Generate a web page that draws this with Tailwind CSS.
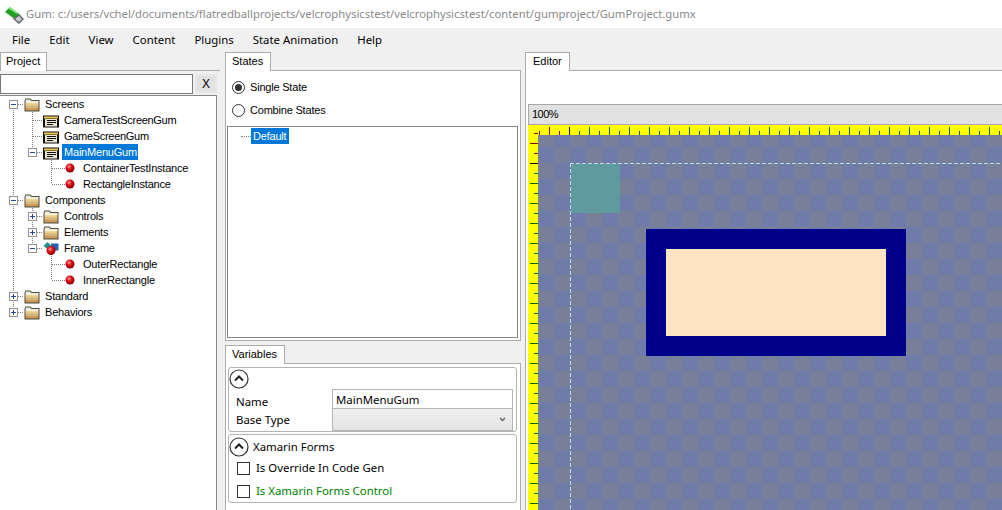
<!DOCTYPE html>
<html lang="en">
<head>
    <meta charset="UTF-8">
    <title>Gum</title>
    <script src="https://cdn.jsdelivr.net/npm/@tailwindcss/browser@4"></script>
</head>
<body class="w-[1002px] h-[510px] overflow-hidden bg-[#f0f0f0] font-['Noto_Sans',sans-serif] text-[11.4px] leading-4 text-black">
    <svg class="absolute w-0 h-0">
        <defs>
            <linearGradient id="folderFill" x1="0" y1="0" x2="0" y2="1">
                <stop offset="0" stop-color="#f3dc98"/>
                <stop offset="1" stop-color="#c08f55"/>
            </linearGradient>
            <radialGradient id="ballFill" cx="0.4" cy="0.35" r="0.7">
                <stop offset="0" stop-color="#ffa0a0"/>
                <stop offset="0.4" stop-color="#e01016"/>
                <stop offset="1" stop-color="#7a0508"/>
            </radialGradient>
            <symbol id="folder" viewBox="0 0 16 16">
                <path d="M0.5 5 L1.500 2.500 H6.500 L8 4 H15.500 V15.500 H0.500 Z" fill="#4f4c38"/>
                <path d="M1.500 5 L2.200 3.500 H6 L7.500 5 H14.500 V7 H1.500 Z" fill="#f2efe0"/>
                <rect x="1.500" y="7" width="13" height="7.500" fill="url(#folderFill)"/>
            </symbol>
            <symbol id="screen" viewBox="0 0 16 16">
                <rect x="0" y="3.500" width="16" height="12" fill="#111"/>
                <rect x="1" y="4.500" width="14" height="2" fill="#f2c94c"/>
                <rect x="2" y="7" width="12" height="7.500" fill="#e8e4d0"/>
                <path d="M4 8.500 H13 M4 10.500 H13 M4 12.500 H10" stroke="#111" fill="none"/>
            </symbol>
            <symbol id="ball" viewBox="0 0 10 10">
                <circle cx="5" cy="5" r="4.500" fill="url(#ballFill)"/>
            </symbol>
            <symbol id="frameIcon" viewBox="0 0 16 16">
                <path d="M0.500 6 L4.500 2 L8 5.500 L4.500 9 Z" fill="#1f8f8a"/>
                <rect x="8" y="3.500" width="7.500" height="7" fill="#2a5fb5"/>
                <circle cx="8" cy="10.500" r="4.500" fill="url(#ballFill)"/>
            </symbol>
            <symbol id="collapse" viewBox="0 0 20 20">
                <circle cx="10" cy="10" r="9" fill="#fff" stroke="#333" stroke-width="1.200"/>
                <path d="M6 11.500 L10 7.500 L14 11.500" fill="none" stroke="#222" stroke-width="2"/>
            </symbol>
        </defs>
    </svg>

    <!-- title bar -->
    <div class="h-[28px] bg-white flex items-center pl-[5px] gap-px">
        <svg class="w-[20px] h-[20px] mt-[2px]" viewBox="0 0 20 20">
            <path d="M0 7 L5 2 L13 8 L16 11 L11 15 Z" fill="#22a022"/>
            <path d="M5 2 L13 8 L12 9 L3.500 3.500 Z" fill="#86e886"/>
            <path d="M8 14 L14 9 L19 14 L14 19 Z" fill="#62666a"/>
            <path d="M10 14 L14 11 L17 14 L14 17 Z" fill="#c8ccd0"/>
        </svg>
        <span class="text-[#8a8a8a] text-[11.3px] whitespace-nowrap">Gum: c:/users/vchel/documents/flatredballprojects/velcrophysicstest/velcrophysicstest/content/gumproject/GumProject.gumx</span>
    </div>

    <!-- menu bar -->
    <div class="h-[22px] flex items-center pl-[12px] pt-[2px] gap-[19px]">
        <span>File</span>
        <span>Edit</span>
        <span>View</span>
        <span>Content</span>
        <span>Plugins</span>
        <span>State Animation</span>
        <span>Help</span>
    </div>

    <div class="h-[460px] flex">
        <!-- project column -->
        <div class="w-[220px] shrink-0 flex flex-col">
            <div class="h-[20px] pt-[2px] flex">
                <div class="w-[47px] bg-white border border-b-0 border-[#acacac] pl-[5px] -mb-px z-10 font-['Liberation_Sans',sans-serif] text-[11px]">Project</div>
            </div>
            <div class="flex-1 border-t border-[#acacac] flex flex-col">
                <div class="h-[24px] flex pt-[3px] gap-[2px]">
                    <div class="w-[193px] h-[20px] bg-white border border-[#7a7a7a]"></div>
                    <div class="w-[22px] h-[19px] bg-[#e1e1e1] border-2 border-[#e8e8e8] flex items-center justify-center font-['Liberation_Sans',sans-serif] text-[12px]">X</div>
                </div>
                <div class="relative w-[217px] flex-1 bg-white border-t border-r border-[#828790] font-['Liberation_Sans',sans-serif] text-[11px] tracking-[-0.2px]">
                    <!-- connector lines and expander boxes lie over the rows -->
                    <svg class="absolute left-0 top-[-1px] w-[216px] h-[240px]" viewBox="0 95 216 240" fill="none" stroke="#808080" stroke-dasharray="1 1" shape-rendering="crispEdges">
                        <path d="M13.500 104 V312 M13.500 104.500 H24 M13.500 200.500 H24 M13.500 296.500 H24 M13.500 312.500 H24"/>
                        <path d="M32.500 104 V148 M32.500 120.500 H43 M32.500 136.500 H43 M32.500 152.500 H43"/>
                        <path d="M32.500 200 V244 M32.500 216.500 H43 M32.500 232.500 H43 M32.500 248.500 H43"/>
                        <path d="M51.500 152 V184 M51.500 168.500 H65 M51.500 184.500 H65"/>
                        <path d="M51.500 248 V280 M51.500 264.500 H65 M51.500 280.500 H65"/>
                        <g stroke-dasharray="none" fill="#fff" stroke="#919191">
                            <rect x="9.500" y="100.500" width="8" height="8"/>
                            <rect x="9.500" y="196.500" width="8" height="8"/>
                            <rect x="9.500" y="292.500" width="8" height="8"/>
                            <rect x="9.500" y="308.500" width="8" height="8"/>
                            <rect x="28.500" y="148.500" width="8" height="8"/>
                            <rect x="28.500" y="212.500" width="8" height="8"/>
                            <rect x="28.500" y="228.500" width="8" height="8"/>
                            <rect x="28.500" y="244.500" width="8" height="8"/>
                        </g>
                        <g stroke-dasharray="none" stroke="#2a4a8a">
                            <path d="M11 104.500 H16 M11 200.500 H16 M11 296.500 H16 M13.500 294 V299 M11 312.500 H16 M13.500 310 V315"/>
                            <path d="M30 152.500 H35 M30 216.500 H35 M32.500 214 V219 M30 232.500 H35 M32.500 230 V235 M30 248.500 H35"/>
                        </g>
                    </svg>
                    <div class="relative">
                        <div class="h-4 flex items-center pl-[24px] gap-[5px]"><svg class="w-4 h-4"><use href="#folder"/></svg><span>Screens</span></div>
                        <div class="h-4 flex items-center pl-[43px] gap-[5px]"><svg class="w-4 h-4"><use href="#screen"/></svg><span class="tracking-[-0.3px]">CameraTestScreenGum</span></div>
                        <div class="h-4 flex items-center pl-[43px] gap-[5px]"><svg class="w-4 h-4"><use href="#screen"/></svg><span class="tracking-[-0.3px]">GameScreenGum</span></div>
                        <div class="h-4 flex items-center pl-[43px] gap-[3px]"><svg class="w-4 h-4"><use href="#screen"/></svg><span class="bg-[#0078d7] text-white px-[2px] h-4 w-[76px] whitespace-nowrap">MainMenuGum</span></div>
                        <div class="h-4 flex items-center pl-[65px] gap-[8px]"><svg class="w-[10px] h-[10px]"><use href="#ball"/></svg><span>ContainerTestInstance</span></div>
                        <div class="h-4 flex items-center pl-[65px] gap-[8px]"><svg class="w-[10px] h-[10px]"><use href="#ball"/></svg><span>RectangleInstance</span></div>
                        <div class="h-4 flex items-center pl-[24px] gap-[5px]"><svg class="w-4 h-4"><use href="#folder"/></svg><span>Components</span></div>
                        <div class="h-4 flex items-center pl-[43px] gap-[5px]"><svg class="w-4 h-4"><use href="#folder"/></svg><span>Controls</span></div>
                        <div class="h-4 flex items-center pl-[43px] gap-[5px]"><svg class="w-4 h-4"><use href="#folder"/></svg><span>Elements</span></div>
                        <div class="h-4 flex items-center pl-[43px] gap-[5px]"><svg class="w-4 h-4"><use href="#frameIcon"/></svg><span>Frame</span></div>
                        <div class="h-4 flex items-center pl-[65px] gap-[8px]"><svg class="w-[10px] h-[10px]"><use href="#ball"/></svg><span>OuterRectangle</span></div>
                        <div class="h-4 flex items-center pl-[65px] gap-[8px]"><svg class="w-[10px] h-[10px]"><use href="#ball"/></svg><span>InnerRectangle</span></div>
                        <div class="h-4 flex items-center pl-[24px] gap-[5px]"><svg class="w-4 h-4"><use href="#folder"/></svg><span>Standard</span></div>
                        <div class="h-4 flex items-center pl-[24px] gap-[5px]"><svg class="w-4 h-4"><use href="#folder"/></svg><span>Behaviors</span></div>
                    </div>
                </div>
            </div>
        </div>

        <!-- states and variables column -->
        <div class="w-[296px] ml-[5px] shrink-0 flex flex-col">
            <div class="h-[20px] pt-[2px] flex">
                <div class="w-[46px] bg-white border border-b-0 border-[#acacac] pl-[6px] -mb-px z-10 font-['Liberation_Sans',sans-serif] text-[11px]">States</div>
            </div>
            <div class="h-[271px] bg-white border border-[#acacac] px-[1px] flex flex-col font-['Liberation_Sans',sans-serif] text-[11px] tracking-[-0.2px]">
                <div class="h-[55px] pl-[5px] pt-[8px] flex flex-col gap-[7px]">
                    <div class="h-4 flex items-center gap-[5px]">
                        <span class="w-[13px] h-[13px] rounded-full border border-[#333] flex items-center justify-center"><span class="w-[7px] h-[7px] rounded-full bg-[#333]"></span></span>
                        <span>Single State</span>
                    </div>
                    <div class="h-4 flex items-center gap-[5px]">
                        <span class="w-[13px] h-[13px] rounded-full border border-[#333]"></span>
                        <span>Combine States</span>
                    </div>
                </div>
                <div class="w-[291px] h-[212px] border border-[#828790] pl-[13px] pt-px flex items-start">
                    <span class="w-[10px] mt-2 border-t border-dotted border-[#808080]"></span>
                    <span class="bg-[#0078d7] text-white px-[2px] w-[38px] h-4">Default</span>
                </div>
            </div>
            <div class="h-[22px] pt-[4px] flex">
                <div class="w-[60px] bg-white border border-b-0 border-[#acacac] pl-[6px] -mb-px z-10 font-['Liberation_Sans',sans-serif] text-[11px]">Variables</div>
            </div>
            <div class="flex-1 bg-white border border-b-0 border-[#acacac] px-[2px] pt-[3px]">
                <div class="w-[289px] h-[65px] rounded-[3px] border border-[#b4b4b4] flex flex-col">
                    <div class="h-[21px] pt-px"><svg class="w-[20px] h-[20px]"><use href="#collapse"/></svg></div>
                    <div class="h-[20px] flex items-center">
                        <span class="w-[103px] pl-[7px] pt-[5px]">Name</span>
                        <div class="w-[181px] h-[20px] border border-[#b4b4b4] pl-[3px] pt-[2px]">MainMenuGum</div>
                    </div>
                    <div class="h-[22px] flex items-center">
                        <span class="w-[103px] pl-[7px]">Base Type</span>
                        <div class="w-[181px] h-[22px] bg-gradient-to-b from-[#f0f0f0] to-[#e4e4e4] border border-t-0 border-[#b4b4b4] flex items-center justify-end pr-[6px]">
                            <svg class="w-[7px] h-[5px]" viewBox="0 0 7 5" fill="none" stroke="#666" stroke-width="1.300"><path d="M1 1 L3.500 3.500 L6 1"/></svg>
                        </div>
                    </div>
                </div>
                <div class="w-[289px] h-[69px] mt-[2px] rounded-[3px] border border-[#b4b4b4]">
                    <div class="h-[22px] pt-px flex items-center gap-[4px]"><svg class="w-[20px] h-[20px]"><use href="#collapse"/></svg><span>Xamarin Forms</span></div>
                    <div class="mt-[3px] pl-[8px] h-4 flex items-center gap-[6px]">
                        <span class="w-[13px] h-[13px] border border-[#333]"></span>
                        <span>Is Override In Code Gen</span>
                    </div>
                    <div class="mt-[7px] pl-[8px] h-4 flex items-center gap-[6px]">
                        <span class="w-[13px] h-[13px] border border-[#333]"></span>
                        <span class="text-[#008000]">Is Xamarin Forms Control</span>
                    </div>
                </div>
            </div>
        </div>

        <!-- editor column -->
        <div class="flex-1 ml-[4px] flex flex-col min-w-0">
            <div class="h-[20px] pt-[2px] flex">
                <div class="w-[45px] bg-white border border-b-0 border-[#acacac] pl-[7px] -mb-px z-10 font-['Liberation_Sans',sans-serif] text-[11px]">Editor</div>
            </div>
            <div class="flex-1 bg-white border-t border-l border-[#acacac] pl-[2px] pt-[33px] flex flex-col">
                <div class="h-[21px] bg-[#e1e1e1] border-t border-b border-l border-[#a8a8a8] pl-[3px] leading-[18px] font-['Liberation_Sans',sans-serif] text-[11px] tracking-[-0.5px]">100%</div>
                <div class="relative flex-1 bg-[#ffff00] overflow-hidden">
                    <svg id="ruler" class="absolute inset-0 w-[474px] h-[386px]" shape-rendering="crispEdges"></svg>
                    <!-- free canvas: checkerboard with the placed runtime objects -->
                    <div class="absolute left-[10px] top-[10px] w-[464px] h-[376px] overflow-hidden bg-[#717ba9]">
                        <svg class="absolute inset-0 w-full h-full">
                            <defs>
                                <pattern id="checker" y="-4" width="32" height="32" patternUnits="userSpaceOnUse">
                                    <rect width="16" height="16" fill="#777f99"/>
                                    <rect x="16" y="16" width="16" height="16" fill="#777f99"/>
                                </pattern>
                            </defs>
                            <rect width="100%" height="100%" fill="url(#checker)"/>
                        </svg>
                        <div class="absolute left-[33px] top-[29px] w-[49px] h-[49px] bg-[#5f9a9e]"></div>
                        <svg class="absolute left-[32px] top-[28px] w-[440px] h-[360px]" fill="none" stroke="#b8dce8" stroke-dasharray="4 2" shape-rendering="crispEdges">
                            <path d="M0 0.500 H440 M0.500 0 V360"/>
                        </svg>
                        <div class="absolute left-[108px] top-[94px] w-[260px] h-[127px] bg-[#00008b] p-[20px]">
                            <div class="w-[220px] h-[87px] bg-[#ffe4c4]"></div>
                        </div>
                    </div>
                </div>
            </div>
        </div>
    </div>

    <script>
        // ruler ticks: every 10px, long and black at the origin, dark red before it, green after
        const ruler = document.getElementById('ruler');
        let marks = '';
        for (let i = 0; i < 48; i++) {
            const x = 11 + i * 10;
            const n = i - 3;
            const color = n === 0 ? '#000' : n < 0 ? '#8b0000' : '#006400';
            const len = n % 2 === 0 ? 8 : 4;
            marks += `<rect x="${x}" y="${10 - len}" width="1" height="${len}" fill="${color}"/>`;
        }
        for (let i = 0; i < 40; i++) {
            const y = 8 + i * 10;
            const n = i - 3;
            const color = n === 0 ? '#000' : n < 0 ? '#8b0000' : '#006400';
            const len = n % 2 === 0 ? 8 : 4;
            marks += `<rect x="${10 - len}" y="${y}" width="${len}" height="1" fill="${color}"/>`;
        }
        ruler.innerHTML = marks;
    </script>
</body>
</html>
